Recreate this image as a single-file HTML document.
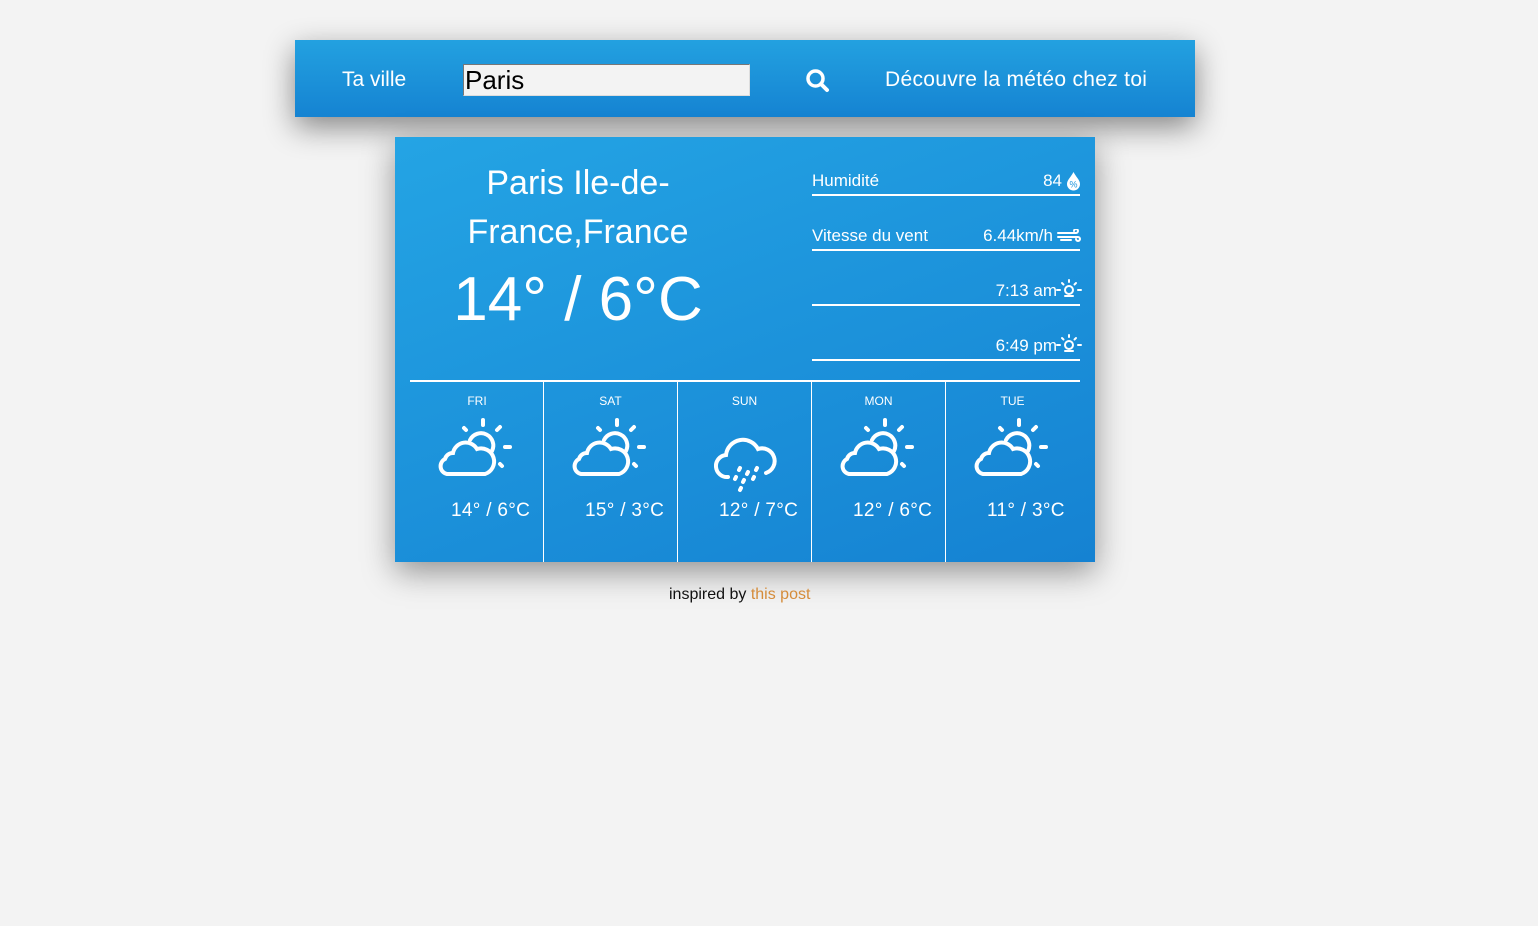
<!DOCTYPE html>
<html><head><meta charset="utf-8"><style>
*{margin:0;padding:0;box-sizing:border-box}
body{width:1538px;height:926px;background:#f3f3f3;font-family:"Liberation Sans",sans-serif;position:relative;overflow:hidden;color:#fff}
.hdr{position:absolute;left:295px;top:40px;width:900px;height:77px;background:linear-gradient(#23a1e0,#1583d2);box-shadow:0 10px 30px rgba(0,0,0,.45)}
.card{position:absolute;left:395px;top:137px;width:700px;height:425px;background:linear-gradient(160deg,#24a4e4,#1582d2);box-shadow:0 10px 30px rgba(0,0,0,.4)}
.a{position:absolute;white-space:nowrap}
.inp{position:absolute;left:168px;top:24px;width:287px;height:32px;background:#f3f3f3;border:1px solid #777;border-right-color:#ddd;border-bottom-color:#ddd;color:#000;font-size:26px;line-height:30px;padding-left:1px}
.row{position:absolute;left:417px;width:268px;border-bottom:2px solid #fff;height:2px}
.col{position:absolute;top:244px;height:181px;width:134px;border-left:1px solid #fff}
.col .d{position:absolute;top:13px;width:100%;text-align:center;font-size:12px}
.col .t{position:absolute;top:119px;left:41px;font-size:19px;letter-spacing:.3px}
.col svg{position:absolute;left:27px;top:36px}
</style></head><body>
<div class="hdr">
 <div class="a" style="left:47px;top:28px;font-size:21px">Ta ville</div>
 <div class="inp">Paris</div>
 <svg class="a" style="left:510px;top:28px" width="26" height="26" viewBox="0 0 26 26"><circle cx="10.5" cy="10.5" r="7.5" fill="none" stroke="#fff" stroke-width="3.5"/><line x1="16" y1="16" x2="22" y2="22" stroke="#fff" stroke-width="4" stroke-linecap="round"/></svg>
 <div class="a" style="left:590px;top:28px;font-size:21px;letter-spacing:.3px">Découvre la météo chez toi</div>
</div>
<div class="card">
 <div class="a" style="left:0;width:366px;top:22px;text-align:center;font-size:34px;line-height:49px;white-space:normal;font-weight:300">Paris Ile-de-<br>France,France</div>
 <div class="a" style="left:0;width:366px;top:127px;text-align:center;font-size:62px;font-weight:300">14° / 6°C</div>
 <div class="a" style="left:417px;top:34px;font-size:17px">Humidité</div>
 <div class="a" style="right:33px;top:34px;font-size:17px">84</div>
 <svg class="a" style="left:671px;top:34px" width="15" height="20" viewBox="0 0 15 20"><path d="M7.5 1 C10 6 14 9 14 13 A6.5 6.5 0 0 1 1 13 C1 9 5 6 7.5 1Z" fill="#fff"/><text x="7.5" y="16.5" font-size="9" fill="#1d95dc" text-anchor="middle" font-family="Liberation Sans">%</text></svg>
 <div class="row" style="top:57px"></div>
 <div class="a" style="left:417px;top:89px;font-size:17px">Vitesse du vent</div>
 <div class="a" style="right:42px;top:89px;font-size:17px">6.44km/h</div>
 <svg class="a" style="left:662px;top:92px" width="24" height="14" viewBox="0 0 24 14"><path d="M1 4H19A2 2 0 1 0 17 2M1 8H21A2 2 0 1 1 19 10M4 11H14" stroke="#fff" stroke-width="2" fill="none" stroke-linecap="round"/></svg>
 <div class="row" style="top:112px"></div>
 <div class="a" style="right:38px;top:144px;font-size:17px">7:13 am</div>
 <svg class="a" style="left:661px;top:141px" width="26" height="20" viewBox="0 0 26 20"><g stroke="#fff" stroke-width="2" fill="none" stroke-linecap="round"><circle cx="13" cy="12" r="4"/><path d="M13 2V4M6 5L7.5 6.5M20 5L18.5 6.5M1 12H4M22 12H25M9 18H17"/></g></svg>
 <div class="row" style="top:167px"></div>
 <div class="a" style="right:38px;top:199px;font-size:17px">6:49 pm</div>
 <svg class="a" style="left:661px;top:196px" width="26" height="20" viewBox="0 0 26 20"><g stroke="#fff" stroke-width="2" fill="none" stroke-linecap="round"><circle cx="13" cy="12" r="4"/><path d="M13 2V4M6 5L7.5 6.5M20 5L18.5 6.5M1 12H4M22 12H25M9 18H17"/></g></svg>
 <div class="row" style="top:222px"></div>
 <div class="a" style="left:15px;top:243px;width:670px;height:2px;background:#fff"></div>
 <div class="col" style="left:15px;border-left:none"><div class="d">FRI</div><svg width="80" height="64" viewBox="0 0 80 64"><use href="#pc"/></svg><div class="t">14° / 6°C</div></div>
 <div class="col" style="left:148px"><div class="d">SAT</div><svg width="80" height="64" viewBox="0 0 80 64"><use href="#pc"/></svg><div class="t">15° / 3°C</div></div>
 <div class="col" style="left:282px"><div class="d">SUN</div><svg style="left:36px;top:44px" width="80" height="80" viewBox="0 0 80 80"><use href="#rain"/></svg><div class="t">12° / 7°C</div></div>
 <div class="col" style="left:416px"><div class="d">MON</div><svg width="80" height="64" viewBox="0 0 80 64"><use href="#pc"/></svg><div class="t">12° / 6°C</div></div>
 <div class="col" style="left:550px"><div class="d">TUE</div><svg width="80" height="64" viewBox="0 0 80 64"><use href="#pc"/></svg><div class="t">11° / 3°C</div></div>
</div>
<svg width="0" height="0" style="position:absolute"><defs>
 <g id="pc" stroke="#fff" stroke-width="4" fill="none" stroke-linecap="round">
  <path d="M46 3V8M27 11L29 13M63 10L60 13M68 30H73M63 47L65 49"/>
  <path d="M33 23A10 10 0 0 1 55 34"/>
  <path d="M10 57A8 8 0 0 1 8 42A8 8 0 0 1 16 36A13 13 0 0 1 40 32A11 11 0 0 1 48 57Z"/>
 </g>
 <g id="rain" stroke="#fff" fill="none" stroke-linecap="round">
  <path d="M14 52A10 10 0 0 1 12 30A17 17 0 0 1 44 24A10 10 0 0 1 52 48" stroke-width="4"/>
  <path d="M26 43L25 45M43 43L42 45M34 47L33 49M22 52L21 54M40 52L39 54M30 55L29 57M27 63L26 65" stroke-width="4"/>
 </g>
</defs></svg>
<div class="a" style="left:669px;top:586px;font-size:16px;color:#111">inspired by <span style="color:#d58c3a">this post</span></div>
</body></html>
